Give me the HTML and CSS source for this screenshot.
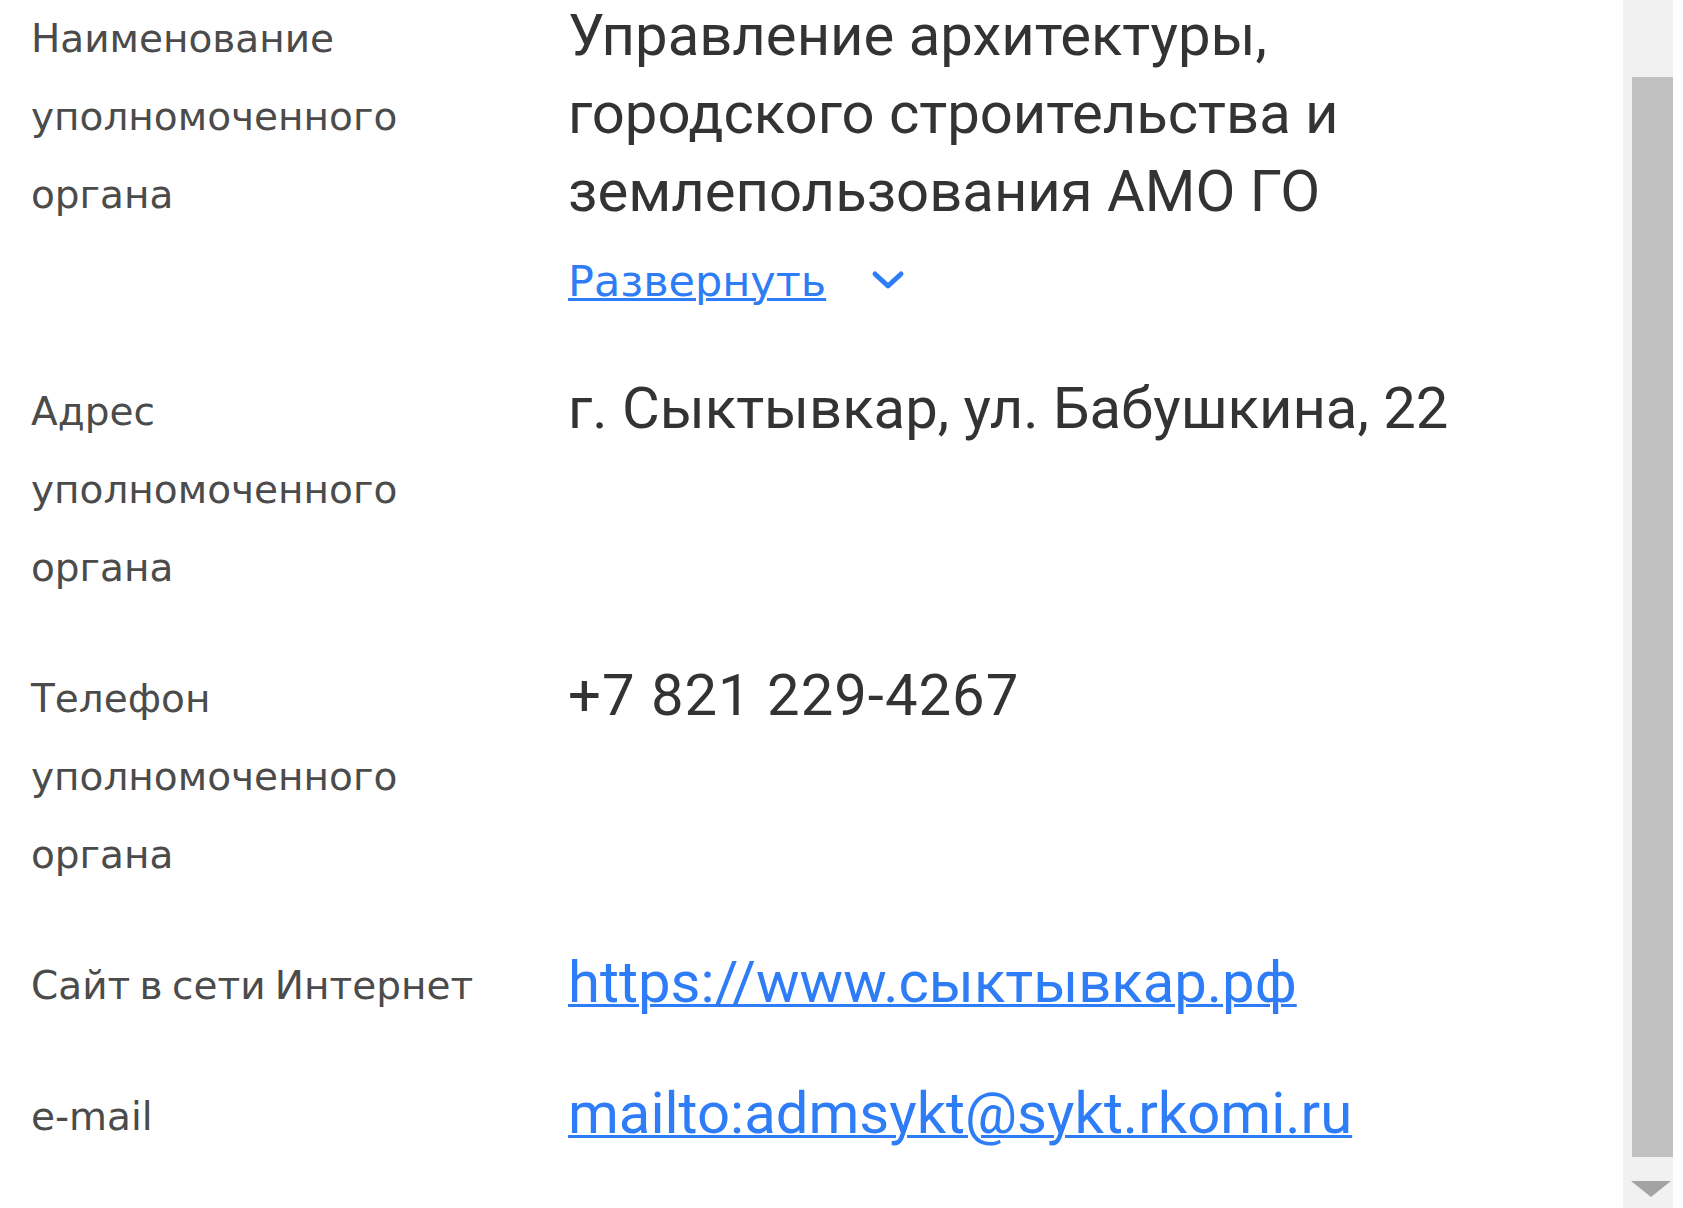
FILE: index.html
```html
<!DOCTYPE html>
<html lang="ru">
<head>
    <meta charset="UTF-8">
    <meta name="viewport" content="width=device-width, initial-scale=1.0">
    <title>Уполномоченный орган</title>
    <link rel="stylesheet" href="styles.css">
</head>
<body>
    <div class="frame">
        <div class="details">
            <div class="row">
                <div class="label">Наименование уполномоченного органа</div>
                <div class="value">
                    <div class="value-text">Управление архитектуры, городского строительства и землепользования АМО ГО</div>
                    <div class="expand">
                        <a href="#">Развернуть</a>
                        <svg class="chevron" width="36" height="22" viewBox="0 0 36 22">
                            <path d="M5 5 L18 17 L31 5" fill="none" stroke="#2e7cf6" stroke-width="5" stroke-linecap="round" stroke-linejoin="round"/>
                        </svg>
                    </div>
                </div>
            </div>

            <div class="row">
                <div class="label">Адрес уполномоченного органа</div>
                <div class="value">
                    <div class="value-text">г. Сыктывкар, ул. Бабушкина, 22</div>
                </div>
            </div>

            <div class="row">
                <div class="label">Телефон уполномоченного органа</div>
                <div class="value">
                    <div class="value-text phone">+7 821 229-4267</div>
                </div>
            </div>

            <div class="row">
                <div class="label">Сайт в сети Интернет</div>
                <div class="value">
                    <a class="value-text link" href="#">https://www.сыктывкар.рф</a>
                </div>
            </div>

            <div class="row">
                <div class="label">e-mail</div>
                <div class="value">
                    <a class="value-text link" href="#">mailto:admsykt@sykt.rkomi.ru</a>
                </div>
            </div>
        </div>

        <!-- scrollbar of the inner panel -->
        <div class="scrollbar">
            <div class="thumb"></div>
            <div class="arrow-down"></div>
        </div>
    </div>
</body>
</html>
```

FILE: styles.css
```css
body {
    margin: 0;
    padding: 0;
    background-color: #fff;
    font-family: "DejaVu Sans", sans-serif;
}

.frame {
    display: flex;
    height: 1208px;
    overflow: hidden;
}

.details {
    flex-grow: 1;
    padding-left: 31px;
}

.row {
    display: grid;
    grid-template-columns: 537px 1fr;
    padding-bottom: 53px;
}

.label {
    width: 460px;
    font-size: 39px;
    line-height: 78px;
    color: #4b4b4b;
    word-spacing: -3px;
}

.value {
    margin-top: -4px;
    max-width: 950px;
}

.value-text {
    display: block;
    font-family: Roboto, sans-serif;
    font-size: 58px;
    line-height: 78px;
    color: #333;
}

.phone {
    letter-spacing: 1px;
}

a {
    color: #2e7cf6;
    text-decoration-thickness: 3px;
}

a.link {
    display: inline-block;
    color: #2e7cf6;
    white-space: nowrap;
}

.expand {
    display: flex;
    align-items: center;
    gap: 44px;
    margin-top: 12px;
    height: 78px;
}

.expand a {
    font-size: 43px;
}

.chevron {
    margin-top: -2px;
}

.scrollbar {
    width: 50px;
    margin-right: 10px;
    background-color: #f1f1f1;
    display: flex;
    flex-direction: column;
    align-items: flex-end;
    padding-top: 77px;
    box-sizing: border-box;
}

.thumb {
    width: 41px;
    height: 1080px;
    background-color: #c1c1c1;
}

.arrow-down {
    margin-top: 24px;
    margin-right: 2px;
    width: 0;
    height: 0;
    border-left: 20px solid transparent;
    border-right: 20px solid transparent;
    border-top: 16px solid #a3a3a3;
}
```
